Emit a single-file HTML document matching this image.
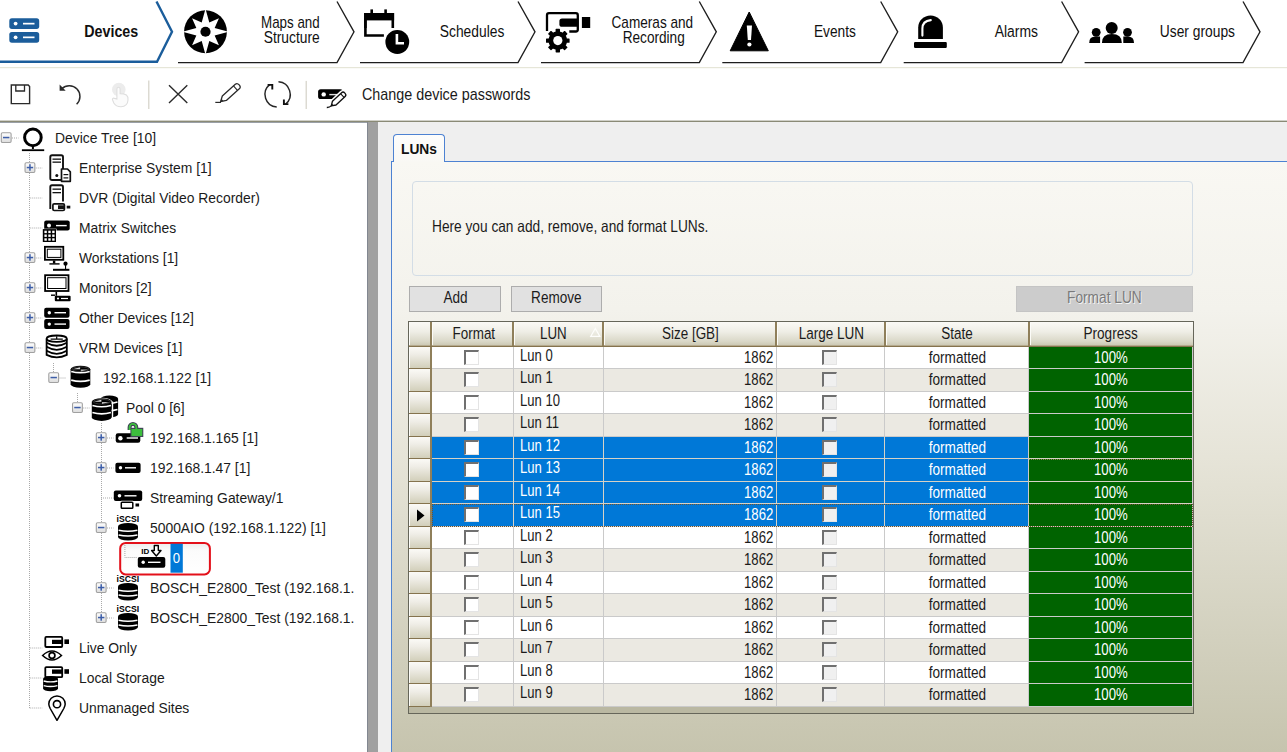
<!DOCTYPE html>
<html><head><meta charset="utf-8"><title>LUNs</title>
<style>
html,body{margin:0;padding:0;}
body{width:1287px;height:752px;position:relative;overflow:hidden;background:#fff;font-family:'Liberation Sans',sans-serif;}
</style></head><body>
<div style="position:absolute;left:378px;top:122px;width:909px;height:630px;background:#efefef"></div><div style="position:absolute;left:367px;top:122px;width:11px;height:630px;background:#a0a0a0"></div><div style="position:absolute;left:367px;top:122px;width:1px;height:630px;background:#828790"></div><div style="position:absolute;left:0px;top:122px;width:367px;height:1px;background:#9aa0a8"></div><div style="position:absolute;left:391px;top:161px;width:896px;height:591px;box-sizing:border-box;border-left:1px solid #4d82d2;border-top:1px solid #4d82d2;background:linear-gradient(#f9f8f3 0%, #f3f2ec 25%, #e6e4d8 50%, #d6d4c3 75%, #c6c4ae 100%)"></div><div style="position:absolute;left:393px;top:134px;width:52px;height:28px;box-sizing:border-box;border:1px solid #4d82d2;border-bottom:none;border-radius:4px 4px 0 0;background:linear-gradient(#fdfdfc,#f9f8f4)"></div><div style="position:absolute;left:401.00px;top:139.91px;width:38.86px;font-family:'Liberation Sans',sans-serif;font-size:14.7px;line-height:18px;color:#111;white-space:nowrap;font-weight:bold;transform:scaleX(0.9385);transform-origin:left 50%;">LUNs</div><div style="position:absolute;left:411.5px;top:181px;width:781px;height:95px;box-sizing:border-box;border:1px solid #d3dde6;border-radius:4px;"></div><div style="position:absolute;left:432.40px;top:215.58px;width:333.42px;font-family:'Liberation Sans',sans-serif;font-size:16.5px;line-height:21px;color:#1b1b1b;white-space:nowrap;transform:scaleX(0.8302);transform-origin:left 50%;">Here you can add, remove, and format LUNs.</div><div style="position:absolute;left:409px;top:286px;width:91.5px;height:26px;box-sizing:border-box;border:1px solid #adadad;background:#e1e1e1"></div><div style="position:absolute;left:440.56px;top:286.75px;width:29.48px;font-family:'Liberation Sans',sans-serif;font-size:16.3px;line-height:20px;color:#1b1b1b;white-space:nowrap;transform:scaleX(0.8349);transform-origin:center 50%;">Add</div><div style="position:absolute;left:510.5px;top:286px;width:91.0px;height:26px;box-sizing:border-box;border:1px solid #adadad;background:#e1e1e1"></div><div style="position:absolute;left:525.98px;top:286.75px;width:61.14px;font-family:'Liberation Sans',sans-serif;font-size:16.3px;line-height:20px;color:#1b1b1b;white-space:nowrap;transform:scaleX(0.8328);transform-origin:center 50%;">Remove</div><div style="position:absolute;left:1015.5px;top:286px;width:177.0px;height:26px;box-sizing:border-box;border:1px solid #c4c4c4;background:#cccccc"></div><div style="position:absolute;left:1059.96px;top:286.75px;width:89.17px;font-family:'Liberation Sans',sans-serif;font-size:16.3px;line-height:20px;color:#7a7a7a;white-space:nowrap;transform:scaleX(0.8413);transform-origin:center 50%;text-shadow:1px 1px 0 #f4f4f4;">Format LUN</div><div style="position:absolute;left:408px;top:321px;width:786px;height:393px;box-sizing:border-box;border:1px solid #66665a;background:#bab8a2"></div><div style="position:absolute;left:409px;top:322px;width:784px;height:24px;background:linear-gradient(#fbfaf6 0%, #efeee6 40%, #dad8c8 80%, #c9c6b0 100%)"></div><div style="position:absolute;left:409px;top:346px;width:784px;height:1px;background:#85734d"></div><div style="position:absolute;left:409px;top:345px;width:784px;height:1px;background:#b5aa8e"></div><div style="position:absolute;left:430px;top:322px;width:2px;height:24px;background:#8f7f5a"></div><div style="position:absolute;left:432px;top:323px;width:1px;height:22px;background:#fcfcf8"></div><div style="position:absolute;left:512px;top:322px;width:2px;height:24px;background:#8f7f5a"></div><div style="position:absolute;left:514px;top:323px;width:1px;height:22px;background:#fcfcf8"></div><div style="position:absolute;left:602px;top:322px;width:2px;height:24px;background:#8f7f5a"></div><div style="position:absolute;left:604px;top:323px;width:1px;height:22px;background:#fcfcf8"></div><div style="position:absolute;left:775px;top:322px;width:2px;height:24px;background:#8f7f5a"></div><div style="position:absolute;left:777px;top:323px;width:1px;height:22px;background:#fcfcf8"></div><div style="position:absolute;left:884px;top:322px;width:2px;height:24px;background:#8f7f5a"></div><div style="position:absolute;left:886px;top:323px;width:1px;height:22px;background:#fcfcf8"></div><div style="position:absolute;left:1028px;top:322px;width:2px;height:24px;background:#8f7f5a"></div><div style="position:absolute;left:1030px;top:323px;width:1px;height:22px;background:#fcfcf8"></div><div style="position:absolute;left:409px;top:323px;width:1px;height:22px;background:#fcfcf8"></div><div style="position:absolute;left:448.21px;top:323.35px;width:52.08px;font-family:'Liberation Sans',sans-serif;font-size:16.3px;line-height:20px;color:#1b1b1b;white-space:nowrap;transform:scaleX(0.8240);transform-origin:center 50%;">Format</div><div style="position:absolute;left:536.71px;top:323.35px;width:33.08px;font-family:'Liberation Sans',sans-serif;font-size:16.3px;line-height:20px;color:#1b1b1b;white-space:nowrap;transform:scaleX(0.8196);transform-origin:center 50%;">LUN</div><div style="position:absolute;left:655.61px;top:323.35px;width:69.28px;font-family:'Liberation Sans',sans-serif;font-size:16.3px;line-height:20px;color:#1b1b1b;white-space:nowrap;transform:scaleX(0.8258);transform-origin:center 50%;">Size [GB]</div><div style="position:absolute;left:791.73px;top:323.35px;width:79.25px;font-family:'Liberation Sans',sans-serif;font-size:16.3px;line-height:20px;color:#1b1b1b;white-space:nowrap;transform:scaleX(0.8292);transform-origin:center 50%;">Large LUN</div><div style="position:absolute;left:937.98px;top:323.35px;width:38.53px;font-family:'Liberation Sans',sans-serif;font-size:16.3px;line-height:20px;color:#1b1b1b;white-space:nowrap;transform:scaleX(0.8283);transform-origin:center 50%;">State</div><div style="position:absolute;left:1078.42px;top:323.35px;width:65.66px;font-family:'Liberation Sans',sans-serif;font-size:16.3px;line-height:20px;color:#1b1b1b;white-space:nowrap;transform:scaleX(0.8349);transform-origin:center 50%;">Progress</div><svg style="position:absolute;left:588px;top:326px" width="14" height="12"><path d="M2.8 10.3 L7.3 2.5 L11.8 10.3 Z" fill="none" stroke="#fdfdfb" stroke-width="1.3"/></svg><div style="position:absolute;left:409px;top:347px;width:22px;height:21px;background:linear-gradient(#fbfaf6 0%, #efede6 35%, #d2cfba 100%)"></div><div style="position:absolute;left:409px;top:347px;width:1px;height:21px;background:#fcfcf8"></div><div style="position:absolute;left:409px;top:368px;width:23px;height:1px;background:#85734d"></div><div style="position:absolute;left:430px;top:347px;width:2px;height:22px;background:#8f7f5a"></div><div style="position:absolute;left:432px;top:347px;width:761px;height:21px;background:#ffffff"></div><div style="position:absolute;left:1029px;top:347px;width:163px;height:21px;background:#006300"></div><div style="position:absolute;left:432px;top:368px;width:761px;height:1px;background:#cacaca"></div><div style="position:absolute;left:513px;top:347px;width:1px;height:21px;background:#cacaca"></div><div style="position:absolute;left:603px;top:347px;width:1px;height:21px;background:#cacaca"></div><div style="position:absolute;left:776px;top:347px;width:1px;height:21px;background:#cacaca"></div><div style="position:absolute;left:884px;top:347px;width:1px;height:21px;background:#cacaca"></div><div style="position:absolute;left:1028px;top:347px;width:1px;height:22px;background:#cacaca"></div><div style="position:absolute;left:1192px;top:347px;width:1px;height:22px;background:#cacaca"></div><div style="position:absolute;left:464px;top:350px;width:15px;height:15px;box-sizing:border-box;border-top:2px solid #707070;border-left:2px solid #707070;border-right:1px solid #e4e4e4;border-bottom:1px solid #e4e4e4;background:#ffffff"></div><div style="position:absolute;left:822px;top:350px;width:15px;height:15px;box-sizing:border-box;border-top:2px solid #707070;border-left:2px solid #707070;border-right:1px solid #e4e4e4;border-bottom:1px solid #e4e4e4;background:#f0f0f0"></div><div style="position:absolute;left:520.00px;top:344.75px;width:41.25px;font-family:'Liberation Sans',sans-serif;font-size:16.3px;line-height:20px;color:#1b1b1b;white-space:nowrap;transform:scaleX(0.8016);transform-origin:left 50%;">Lun 0</div><div style="position:absolute;left:736.67px;top:346.75px;width:36.73px;font-family:'Liberation Sans',sans-serif;font-size:16.3px;line-height:20px;color:#1b1b1b;white-space:nowrap;transform:scaleX(0.8086);transform-origin:right 50%;">1862</div><div style="position:absolute;left:923.36px;top:346.75px;width:69.28px;font-family:'Liberation Sans',sans-serif;font-size:16.3px;line-height:20px;color:#1b1b1b;white-space:nowrap;transform:scaleX(0.8360);transform-origin:center 50%;">formatted</div><div style="position:absolute;left:1090.17px;top:346.75px;width:42.16px;font-family:'Liberation Sans',sans-serif;font-size:16.3px;line-height:20px;color:#fff;white-space:nowrap;transform:scaleX(0.8090);transform-origin:center 50%;">100%</div><div style="position:absolute;left:409px;top:369px;width:22px;height:22px;background:linear-gradient(#fbfaf6 0%, #efede6 35%, #d2cfba 100%)"></div><div style="position:absolute;left:409px;top:369px;width:1px;height:22px;background:#fcfcf8"></div><div style="position:absolute;left:409px;top:391px;width:23px;height:1px;background:#85734d"></div><div style="position:absolute;left:430px;top:369px;width:2px;height:23px;background:#8f7f5a"></div><div style="position:absolute;left:432px;top:369px;width:761px;height:22px;background:#ebe9e2"></div><div style="position:absolute;left:1029px;top:369px;width:163px;height:22px;background:#006300"></div><div style="position:absolute;left:432px;top:391px;width:761px;height:1px;background:#cacaca"></div><div style="position:absolute;left:513px;top:369px;width:1px;height:22px;background:#cacaca"></div><div style="position:absolute;left:603px;top:369px;width:1px;height:22px;background:#cacaca"></div><div style="position:absolute;left:776px;top:369px;width:1px;height:22px;background:#cacaca"></div><div style="position:absolute;left:884px;top:369px;width:1px;height:22px;background:#cacaca"></div><div style="position:absolute;left:1028px;top:369px;width:1px;height:23px;background:#cacaca"></div><div style="position:absolute;left:1192px;top:369px;width:1px;height:23px;background:#cacaca"></div><div style="position:absolute;left:464px;top:372px;width:15px;height:15px;box-sizing:border-box;border-top:2px solid #707070;border-left:2px solid #707070;border-right:1px solid #e4e4e4;border-bottom:1px solid #e4e4e4;background:#ffffff"></div><div style="position:absolute;left:822px;top:372px;width:15px;height:15px;box-sizing:border-box;border-top:2px solid #707070;border-left:2px solid #707070;border-right:1px solid #e4e4e4;border-bottom:1px solid #e4e4e4;background:#f0f0f0"></div><div style="position:absolute;left:520.00px;top:367.25px;width:41.25px;font-family:'Liberation Sans',sans-serif;font-size:16.3px;line-height:20px;color:#1b1b1b;white-space:nowrap;transform:scaleX(0.8016);transform-origin:left 50%;">Lun 1</div><div style="position:absolute;left:736.67px;top:369.25px;width:36.73px;font-family:'Liberation Sans',sans-serif;font-size:16.3px;line-height:20px;color:#1b1b1b;white-space:nowrap;transform:scaleX(0.8086);transform-origin:right 50%;">1862</div><div style="position:absolute;left:923.36px;top:369.25px;width:69.28px;font-family:'Liberation Sans',sans-serif;font-size:16.3px;line-height:20px;color:#1b1b1b;white-space:nowrap;transform:scaleX(0.8360);transform-origin:center 50%;">formatted</div><div style="position:absolute;left:1090.17px;top:369.25px;width:42.16px;font-family:'Liberation Sans',sans-serif;font-size:16.3px;line-height:20px;color:#fff;white-space:nowrap;transform:scaleX(0.8090);transform-origin:center 50%;">100%</div><div style="position:absolute;left:409px;top:392px;width:22px;height:21px;background:linear-gradient(#fbfaf6 0%, #efede6 35%, #d2cfba 100%)"></div><div style="position:absolute;left:409px;top:392px;width:1px;height:21px;background:#fcfcf8"></div><div style="position:absolute;left:409px;top:413px;width:23px;height:1px;background:#85734d"></div><div style="position:absolute;left:430px;top:392px;width:2px;height:22px;background:#8f7f5a"></div><div style="position:absolute;left:432px;top:392px;width:761px;height:21px;background:#ffffff"></div><div style="position:absolute;left:1029px;top:392px;width:163px;height:21px;background:#006300"></div><div style="position:absolute;left:432px;top:413px;width:761px;height:1px;background:#cacaca"></div><div style="position:absolute;left:513px;top:392px;width:1px;height:21px;background:#cacaca"></div><div style="position:absolute;left:603px;top:392px;width:1px;height:21px;background:#cacaca"></div><div style="position:absolute;left:776px;top:392px;width:1px;height:21px;background:#cacaca"></div><div style="position:absolute;left:884px;top:392px;width:1px;height:21px;background:#cacaca"></div><div style="position:absolute;left:1028px;top:392px;width:1px;height:22px;background:#cacaca"></div><div style="position:absolute;left:1192px;top:392px;width:1px;height:22px;background:#cacaca"></div><div style="position:absolute;left:464px;top:395px;width:15px;height:15px;box-sizing:border-box;border-top:2px solid #707070;border-left:2px solid #707070;border-right:1px solid #e4e4e4;border-bottom:1px solid #e4e4e4;background:#ffffff"></div><div style="position:absolute;left:822px;top:395px;width:15px;height:15px;box-sizing:border-box;border-top:2px solid #707070;border-left:2px solid #707070;border-right:1px solid #e4e4e4;border-bottom:1px solid #e4e4e4;background:#f0f0f0"></div><div style="position:absolute;left:520.00px;top:389.75px;width:50.31px;font-family:'Liberation Sans',sans-serif;font-size:16.3px;line-height:20px;color:#1b1b1b;white-space:nowrap;transform:scaleX(0.8015);transform-origin:left 50%;">Lun 10</div><div style="position:absolute;left:736.67px;top:391.75px;width:36.73px;font-family:'Liberation Sans',sans-serif;font-size:16.3px;line-height:20px;color:#1b1b1b;white-space:nowrap;transform:scaleX(0.8086);transform-origin:right 50%;">1862</div><div style="position:absolute;left:923.36px;top:391.75px;width:69.28px;font-family:'Liberation Sans',sans-serif;font-size:16.3px;line-height:20px;color:#1b1b1b;white-space:nowrap;transform:scaleX(0.8360);transform-origin:center 50%;">formatted</div><div style="position:absolute;left:1090.17px;top:391.75px;width:42.16px;font-family:'Liberation Sans',sans-serif;font-size:16.3px;line-height:20px;color:#fff;white-space:nowrap;transform:scaleX(0.8090);transform-origin:center 50%;">100%</div><div style="position:absolute;left:409px;top:414px;width:22px;height:22px;background:linear-gradient(#fbfaf6 0%, #efede6 35%, #d2cfba 100%)"></div><div style="position:absolute;left:409px;top:414px;width:1px;height:22px;background:#fcfcf8"></div><div style="position:absolute;left:409px;top:436px;width:23px;height:1px;background:#85734d"></div><div style="position:absolute;left:430px;top:414px;width:2px;height:23px;background:#8f7f5a"></div><div style="position:absolute;left:432px;top:414px;width:761px;height:22px;background:#ebe9e2"></div><div style="position:absolute;left:1029px;top:414px;width:163px;height:22px;background:#006300"></div><div style="position:absolute;left:432px;top:436px;width:761px;height:1px;background:#cacaca"></div><div style="position:absolute;left:513px;top:414px;width:1px;height:22px;background:#cacaca"></div><div style="position:absolute;left:603px;top:414px;width:1px;height:22px;background:#cacaca"></div><div style="position:absolute;left:776px;top:414px;width:1px;height:22px;background:#cacaca"></div><div style="position:absolute;left:884px;top:414px;width:1px;height:22px;background:#cacaca"></div><div style="position:absolute;left:1028px;top:414px;width:1px;height:23px;background:#cacaca"></div><div style="position:absolute;left:1192px;top:414px;width:1px;height:23px;background:#cacaca"></div><div style="position:absolute;left:464px;top:417px;width:15px;height:15px;box-sizing:border-box;border-top:2px solid #707070;border-left:2px solid #707070;border-right:1px solid #e4e4e4;border-bottom:1px solid #e4e4e4;background:#ffffff"></div><div style="position:absolute;left:822px;top:417px;width:15px;height:15px;box-sizing:border-box;border-top:2px solid #707070;border-left:2px solid #707070;border-right:1px solid #e4e4e4;border-bottom:1px solid #e4e4e4;background:#f0f0f0"></div><div style="position:absolute;left:520.00px;top:412.25px;width:49.09px;font-family:'Liberation Sans',sans-serif;font-size:16.3px;line-height:20px;color:#1b1b1b;white-space:nowrap;transform:scaleX(0.8015);transform-origin:left 50%;">Lun 11</div><div style="position:absolute;left:736.67px;top:414.25px;width:36.73px;font-family:'Liberation Sans',sans-serif;font-size:16.3px;line-height:20px;color:#1b1b1b;white-space:nowrap;transform:scaleX(0.8086);transform-origin:right 50%;">1862</div><div style="position:absolute;left:923.36px;top:414.25px;width:69.28px;font-family:'Liberation Sans',sans-serif;font-size:16.3px;line-height:20px;color:#1b1b1b;white-space:nowrap;transform:scaleX(0.8360);transform-origin:center 50%;">formatted</div><div style="position:absolute;left:1090.17px;top:414.25px;width:42.16px;font-family:'Liberation Sans',sans-serif;font-size:16.3px;line-height:20px;color:#fff;white-space:nowrap;transform:scaleX(0.8090);transform-origin:center 50%;">100%</div><div style="position:absolute;left:409px;top:437px;width:22px;height:21px;background:linear-gradient(#fbfaf6 0%, #efede6 35%, #d2cfba 100%)"></div><div style="position:absolute;left:409px;top:437px;width:1px;height:21px;background:#fcfcf8"></div><div style="position:absolute;left:409px;top:458px;width:23px;height:1px;background:#85734d"></div><div style="position:absolute;left:430px;top:437px;width:2px;height:22px;background:#8f7f5a"></div><div style="position:absolute;left:432px;top:437px;width:761px;height:21px;background:#0078d7"></div><div style="position:absolute;left:1029px;top:437px;width:163px;height:21px;background:#006300"></div><div style="position:absolute;left:432px;top:458px;width:761px;height:1px;background:#d6d2c6"></div><div style="position:absolute;left:513px;top:437px;width:1px;height:21px;background:#d6d2c6"></div><div style="position:absolute;left:603px;top:437px;width:1px;height:21px;background:#d6d2c6"></div><div style="position:absolute;left:776px;top:437px;width:1px;height:21px;background:#d6d2c6"></div><div style="position:absolute;left:884px;top:437px;width:1px;height:21px;background:#d6d2c6"></div><div style="position:absolute;left:1028px;top:437px;width:1px;height:22px;background:#cacaca"></div><div style="position:absolute;left:1192px;top:437px;width:1px;height:22px;background:#cacaca"></div><div style="position:absolute;left:464px;top:440px;width:15px;height:15px;box-sizing:border-box;border-top:2px solid #707070;border-left:2px solid #707070;border-right:1px solid #e4e4e4;border-bottom:1px solid #e4e4e4;background:#ffffff"></div><div style="position:absolute;left:822px;top:440px;width:15px;height:15px;box-sizing:border-box;border-top:2px solid #707070;border-left:2px solid #707070;border-right:1px solid #e4e4e4;border-bottom:1px solid #e4e4e4;background:#f0f0f0"></div><div style="position:absolute;left:520.00px;top:434.75px;width:50.31px;font-family:'Liberation Sans',sans-serif;font-size:16.3px;line-height:20px;color:#ffffff;white-space:nowrap;transform:scaleX(0.8015);transform-origin:left 50%;">Lun 12</div><div style="position:absolute;left:736.67px;top:436.75px;width:36.73px;font-family:'Liberation Sans',sans-serif;font-size:16.3px;line-height:20px;color:#ffffff;white-space:nowrap;transform:scaleX(0.8086);transform-origin:right 50%;">1862</div><div style="position:absolute;left:923.36px;top:436.75px;width:69.28px;font-family:'Liberation Sans',sans-serif;font-size:16.3px;line-height:20px;color:#ffffff;white-space:nowrap;transform:scaleX(0.8360);transform-origin:center 50%;">formatted</div><div style="position:absolute;left:1090.17px;top:436.75px;width:42.16px;font-family:'Liberation Sans',sans-serif;font-size:16.3px;line-height:20px;color:#fff;white-space:nowrap;transform:scaleX(0.8090);transform-origin:center 50%;">100%</div><div style="position:absolute;left:409px;top:459px;width:22px;height:22px;background:linear-gradient(#fbfaf6 0%, #efede6 35%, #d2cfba 100%)"></div><div style="position:absolute;left:409px;top:459px;width:1px;height:22px;background:#fcfcf8"></div><div style="position:absolute;left:409px;top:481px;width:23px;height:1px;background:#85734d"></div><div style="position:absolute;left:430px;top:459px;width:2px;height:23px;background:#8f7f5a"></div><div style="position:absolute;left:432px;top:459px;width:761px;height:22px;background:#0078d7"></div><div style="position:absolute;left:1029px;top:459px;width:163px;height:22px;background:#006300"></div><div style="position:absolute;left:432px;top:481px;width:761px;height:1px;background:#d6d2c6"></div><div style="position:absolute;left:513px;top:459px;width:1px;height:22px;background:#d6d2c6"></div><div style="position:absolute;left:603px;top:459px;width:1px;height:22px;background:#d6d2c6"></div><div style="position:absolute;left:776px;top:459px;width:1px;height:22px;background:#d6d2c6"></div><div style="position:absolute;left:884px;top:459px;width:1px;height:22px;background:#d6d2c6"></div><div style="position:absolute;left:1028px;top:459px;width:1px;height:23px;background:#cacaca"></div><div style="position:absolute;left:1192px;top:459px;width:1px;height:23px;background:#cacaca"></div><div style="position:absolute;left:464px;top:462px;width:15px;height:15px;box-sizing:border-box;border-top:2px solid #707070;border-left:2px solid #707070;border-right:1px solid #e4e4e4;border-bottom:1px solid #e4e4e4;background:#ffffff"></div><div style="position:absolute;left:822px;top:462px;width:15px;height:15px;box-sizing:border-box;border-top:2px solid #707070;border-left:2px solid #707070;border-right:1px solid #e4e4e4;border-bottom:1px solid #e4e4e4;background:#f0f0f0"></div><div style="position:absolute;left:520.00px;top:457.25px;width:50.31px;font-family:'Liberation Sans',sans-serif;font-size:16.3px;line-height:20px;color:#ffffff;white-space:nowrap;transform:scaleX(0.8015);transform-origin:left 50%;">Lun 13</div><div style="position:absolute;left:736.67px;top:459.25px;width:36.73px;font-family:'Liberation Sans',sans-serif;font-size:16.3px;line-height:20px;color:#ffffff;white-space:nowrap;transform:scaleX(0.8086);transform-origin:right 50%;">1862</div><div style="position:absolute;left:923.36px;top:459.25px;width:69.28px;font-family:'Liberation Sans',sans-serif;font-size:16.3px;line-height:20px;color:#ffffff;white-space:nowrap;transform:scaleX(0.8360);transform-origin:center 50%;">formatted</div><div style="position:absolute;left:1090.17px;top:459.25px;width:42.16px;font-family:'Liberation Sans',sans-serif;font-size:16.3px;line-height:20px;color:#fff;white-space:nowrap;transform:scaleX(0.8090);transform-origin:center 50%;">100%</div><div style="position:absolute;left:409px;top:482px;width:22px;height:21px;background:linear-gradient(#fbfaf6 0%, #efede6 35%, #d2cfba 100%)"></div><div style="position:absolute;left:409px;top:482px;width:1px;height:21px;background:#fcfcf8"></div><div style="position:absolute;left:409px;top:503px;width:23px;height:1px;background:#85734d"></div><div style="position:absolute;left:430px;top:482px;width:2px;height:22px;background:#8f7f5a"></div><div style="position:absolute;left:432px;top:482px;width:761px;height:21px;background:#0078d7"></div><div style="position:absolute;left:1029px;top:482px;width:163px;height:21px;background:#006300"></div><div style="position:absolute;left:432px;top:503px;width:761px;height:1px;background:#d6d2c6"></div><div style="position:absolute;left:513px;top:482px;width:1px;height:21px;background:#d6d2c6"></div><div style="position:absolute;left:603px;top:482px;width:1px;height:21px;background:#d6d2c6"></div><div style="position:absolute;left:776px;top:482px;width:1px;height:21px;background:#d6d2c6"></div><div style="position:absolute;left:884px;top:482px;width:1px;height:21px;background:#d6d2c6"></div><div style="position:absolute;left:1028px;top:482px;width:1px;height:22px;background:#cacaca"></div><div style="position:absolute;left:1192px;top:482px;width:1px;height:22px;background:#cacaca"></div><div style="position:absolute;left:464px;top:485px;width:15px;height:15px;box-sizing:border-box;border-top:2px solid #707070;border-left:2px solid #707070;border-right:1px solid #e4e4e4;border-bottom:1px solid #e4e4e4;background:#ffffff"></div><div style="position:absolute;left:822px;top:485px;width:15px;height:15px;box-sizing:border-box;border-top:2px solid #707070;border-left:2px solid #707070;border-right:1px solid #e4e4e4;border-bottom:1px solid #e4e4e4;background:#f0f0f0"></div><div style="position:absolute;left:520.00px;top:479.75px;width:50.31px;font-family:'Liberation Sans',sans-serif;font-size:16.3px;line-height:20px;color:#ffffff;white-space:nowrap;transform:scaleX(0.8015);transform-origin:left 50%;">Lun 14</div><div style="position:absolute;left:736.67px;top:481.75px;width:36.73px;font-family:'Liberation Sans',sans-serif;font-size:16.3px;line-height:20px;color:#ffffff;white-space:nowrap;transform:scaleX(0.8086);transform-origin:right 50%;">1862</div><div style="position:absolute;left:923.36px;top:481.75px;width:69.28px;font-family:'Liberation Sans',sans-serif;font-size:16.3px;line-height:20px;color:#ffffff;white-space:nowrap;transform:scaleX(0.8360);transform-origin:center 50%;">formatted</div><div style="position:absolute;left:1090.17px;top:481.75px;width:42.16px;font-family:'Liberation Sans',sans-serif;font-size:16.3px;line-height:20px;color:#fff;white-space:nowrap;transform:scaleX(0.8090);transform-origin:center 50%;">100%</div><div style="position:absolute;left:409px;top:504px;width:22px;height:22px;background:linear-gradient(#fbfaf6 0%, #efede6 35%, #d2cfba 100%)"></div><div style="position:absolute;left:409px;top:504px;width:1px;height:22px;background:#fcfcf8"></div><div style="position:absolute;left:409px;top:526px;width:23px;height:1px;background:#85734d"></div><div style="position:absolute;left:430px;top:504px;width:2px;height:23px;background:#8f7f5a"></div><div style="position:absolute;left:432px;top:504px;width:761px;height:22px;background:#0078d7"></div><div style="position:absolute;left:1029px;top:504px;width:163px;height:22px;background:#006300"></div><div style="position:absolute;left:432px;top:526px;width:761px;height:1px;background:#d6d2c6"></div><div style="position:absolute;left:513px;top:504px;width:1px;height:22px;background:#d6d2c6"></div><div style="position:absolute;left:603px;top:504px;width:1px;height:22px;background:#d6d2c6"></div><div style="position:absolute;left:776px;top:504px;width:1px;height:22px;background:#d6d2c6"></div><div style="position:absolute;left:884px;top:504px;width:1px;height:22px;background:#d6d2c6"></div><div style="position:absolute;left:1028px;top:504px;width:1px;height:23px;background:#cacaca"></div><div style="position:absolute;left:1192px;top:504px;width:1px;height:23px;background:#cacaca"></div><div style="position:absolute;left:464px;top:507px;width:15px;height:15px;box-sizing:border-box;border-top:2px solid #707070;border-left:2px solid #707070;border-right:1px solid #e4e4e4;border-bottom:1px solid #e4e4e4;background:#ffffff"></div><div style="position:absolute;left:822px;top:507px;width:15px;height:15px;box-sizing:border-box;border-top:2px solid #707070;border-left:2px solid #707070;border-right:1px solid #e4e4e4;border-bottom:1px solid #e4e4e4;background:#f0f0f0"></div><div style="position:absolute;left:520.00px;top:502.25px;width:50.31px;font-family:'Liberation Sans',sans-serif;font-size:16.3px;line-height:20px;color:#ffffff;white-space:nowrap;transform:scaleX(0.8015);transform-origin:left 50%;">Lun 15</div><div style="position:absolute;left:736.67px;top:504.25px;width:36.73px;font-family:'Liberation Sans',sans-serif;font-size:16.3px;line-height:20px;color:#ffffff;white-space:nowrap;transform:scaleX(0.8086);transform-origin:right 50%;">1862</div><div style="position:absolute;left:923.36px;top:504.25px;width:69.28px;font-family:'Liberation Sans',sans-serif;font-size:16.3px;line-height:20px;color:#ffffff;white-space:nowrap;transform:scaleX(0.8360);transform-origin:center 50%;">formatted</div><div style="position:absolute;left:1090.17px;top:504.25px;width:42.16px;font-family:'Liberation Sans',sans-serif;font-size:16.3px;line-height:20px;color:#fff;white-space:nowrap;transform:scaleX(0.8090);transform-origin:center 50%;">100%</div><div style="position:absolute;left:409px;top:527px;width:22px;height:21px;background:linear-gradient(#fbfaf6 0%, #efede6 35%, #d2cfba 100%)"></div><div style="position:absolute;left:409px;top:527px;width:1px;height:21px;background:#fcfcf8"></div><div style="position:absolute;left:409px;top:548px;width:23px;height:1px;background:#85734d"></div><div style="position:absolute;left:430px;top:527px;width:2px;height:22px;background:#8f7f5a"></div><div style="position:absolute;left:432px;top:527px;width:761px;height:21px;background:#ffffff"></div><div style="position:absolute;left:1029px;top:527px;width:163px;height:21px;background:#006300"></div><div style="position:absolute;left:432px;top:548px;width:761px;height:1px;background:#cacaca"></div><div style="position:absolute;left:513px;top:527px;width:1px;height:21px;background:#cacaca"></div><div style="position:absolute;left:603px;top:527px;width:1px;height:21px;background:#cacaca"></div><div style="position:absolute;left:776px;top:527px;width:1px;height:21px;background:#cacaca"></div><div style="position:absolute;left:884px;top:527px;width:1px;height:21px;background:#cacaca"></div><div style="position:absolute;left:1028px;top:527px;width:1px;height:22px;background:#cacaca"></div><div style="position:absolute;left:1192px;top:527px;width:1px;height:22px;background:#cacaca"></div><div style="position:absolute;left:464px;top:530px;width:15px;height:15px;box-sizing:border-box;border-top:2px solid #707070;border-left:2px solid #707070;border-right:1px solid #e4e4e4;border-bottom:1px solid #e4e4e4;background:#ffffff"></div><div style="position:absolute;left:822px;top:530px;width:15px;height:15px;box-sizing:border-box;border-top:2px solid #707070;border-left:2px solid #707070;border-right:1px solid #e4e4e4;border-bottom:1px solid #e4e4e4;background:#f0f0f0"></div><div style="position:absolute;left:520.00px;top:524.75px;width:41.25px;font-family:'Liberation Sans',sans-serif;font-size:16.3px;line-height:20px;color:#1b1b1b;white-space:nowrap;transform:scaleX(0.8016);transform-origin:left 50%;">Lun 2</div><div style="position:absolute;left:736.67px;top:526.75px;width:36.73px;font-family:'Liberation Sans',sans-serif;font-size:16.3px;line-height:20px;color:#1b1b1b;white-space:nowrap;transform:scaleX(0.8086);transform-origin:right 50%;">1862</div><div style="position:absolute;left:923.36px;top:526.75px;width:69.28px;font-family:'Liberation Sans',sans-serif;font-size:16.3px;line-height:20px;color:#1b1b1b;white-space:nowrap;transform:scaleX(0.8360);transform-origin:center 50%;">formatted</div><div style="position:absolute;left:1090.17px;top:526.75px;width:42.16px;font-family:'Liberation Sans',sans-serif;font-size:16.3px;line-height:20px;color:#fff;white-space:nowrap;transform:scaleX(0.8090);transform-origin:center 50%;">100%</div><div style="position:absolute;left:409px;top:549px;width:22px;height:22px;background:linear-gradient(#fbfaf6 0%, #efede6 35%, #d2cfba 100%)"></div><div style="position:absolute;left:409px;top:549px;width:1px;height:22px;background:#fcfcf8"></div><div style="position:absolute;left:409px;top:571px;width:23px;height:1px;background:#85734d"></div><div style="position:absolute;left:430px;top:549px;width:2px;height:23px;background:#8f7f5a"></div><div style="position:absolute;left:432px;top:549px;width:761px;height:22px;background:#ebe9e2"></div><div style="position:absolute;left:1029px;top:549px;width:163px;height:22px;background:#006300"></div><div style="position:absolute;left:432px;top:571px;width:761px;height:1px;background:#cacaca"></div><div style="position:absolute;left:513px;top:549px;width:1px;height:22px;background:#cacaca"></div><div style="position:absolute;left:603px;top:549px;width:1px;height:22px;background:#cacaca"></div><div style="position:absolute;left:776px;top:549px;width:1px;height:22px;background:#cacaca"></div><div style="position:absolute;left:884px;top:549px;width:1px;height:22px;background:#cacaca"></div><div style="position:absolute;left:1028px;top:549px;width:1px;height:23px;background:#cacaca"></div><div style="position:absolute;left:1192px;top:549px;width:1px;height:23px;background:#cacaca"></div><div style="position:absolute;left:464px;top:552px;width:15px;height:15px;box-sizing:border-box;border-top:2px solid #707070;border-left:2px solid #707070;border-right:1px solid #e4e4e4;border-bottom:1px solid #e4e4e4;background:#ffffff"></div><div style="position:absolute;left:822px;top:552px;width:15px;height:15px;box-sizing:border-box;border-top:2px solid #707070;border-left:2px solid #707070;border-right:1px solid #e4e4e4;border-bottom:1px solid #e4e4e4;background:#f0f0f0"></div><div style="position:absolute;left:520.00px;top:547.25px;width:41.25px;font-family:'Liberation Sans',sans-serif;font-size:16.3px;line-height:20px;color:#1b1b1b;white-space:nowrap;transform:scaleX(0.8016);transform-origin:left 50%;">Lun 3</div><div style="position:absolute;left:736.67px;top:549.25px;width:36.73px;font-family:'Liberation Sans',sans-serif;font-size:16.3px;line-height:20px;color:#1b1b1b;white-space:nowrap;transform:scaleX(0.8086);transform-origin:right 50%;">1862</div><div style="position:absolute;left:923.36px;top:549.25px;width:69.28px;font-family:'Liberation Sans',sans-serif;font-size:16.3px;line-height:20px;color:#1b1b1b;white-space:nowrap;transform:scaleX(0.8360);transform-origin:center 50%;">formatted</div><div style="position:absolute;left:1090.17px;top:549.25px;width:42.16px;font-family:'Liberation Sans',sans-serif;font-size:16.3px;line-height:20px;color:#fff;white-space:nowrap;transform:scaleX(0.8090);transform-origin:center 50%;">100%</div><div style="position:absolute;left:409px;top:572px;width:22px;height:21px;background:linear-gradient(#fbfaf6 0%, #efede6 35%, #d2cfba 100%)"></div><div style="position:absolute;left:409px;top:572px;width:1px;height:21px;background:#fcfcf8"></div><div style="position:absolute;left:409px;top:593px;width:23px;height:1px;background:#85734d"></div><div style="position:absolute;left:430px;top:572px;width:2px;height:22px;background:#8f7f5a"></div><div style="position:absolute;left:432px;top:572px;width:761px;height:21px;background:#ffffff"></div><div style="position:absolute;left:1029px;top:572px;width:163px;height:21px;background:#006300"></div><div style="position:absolute;left:432px;top:593px;width:761px;height:1px;background:#cacaca"></div><div style="position:absolute;left:513px;top:572px;width:1px;height:21px;background:#cacaca"></div><div style="position:absolute;left:603px;top:572px;width:1px;height:21px;background:#cacaca"></div><div style="position:absolute;left:776px;top:572px;width:1px;height:21px;background:#cacaca"></div><div style="position:absolute;left:884px;top:572px;width:1px;height:21px;background:#cacaca"></div><div style="position:absolute;left:1028px;top:572px;width:1px;height:22px;background:#cacaca"></div><div style="position:absolute;left:1192px;top:572px;width:1px;height:22px;background:#cacaca"></div><div style="position:absolute;left:464px;top:575px;width:15px;height:15px;box-sizing:border-box;border-top:2px solid #707070;border-left:2px solid #707070;border-right:1px solid #e4e4e4;border-bottom:1px solid #e4e4e4;background:#ffffff"></div><div style="position:absolute;left:822px;top:575px;width:15px;height:15px;box-sizing:border-box;border-top:2px solid #707070;border-left:2px solid #707070;border-right:1px solid #e4e4e4;border-bottom:1px solid #e4e4e4;background:#f0f0f0"></div><div style="position:absolute;left:520.00px;top:569.75px;width:41.25px;font-family:'Liberation Sans',sans-serif;font-size:16.3px;line-height:20px;color:#1b1b1b;white-space:nowrap;transform:scaleX(0.8016);transform-origin:left 50%;">Lun 4</div><div style="position:absolute;left:736.67px;top:571.75px;width:36.73px;font-family:'Liberation Sans',sans-serif;font-size:16.3px;line-height:20px;color:#1b1b1b;white-space:nowrap;transform:scaleX(0.8086);transform-origin:right 50%;">1862</div><div style="position:absolute;left:923.36px;top:571.75px;width:69.28px;font-family:'Liberation Sans',sans-serif;font-size:16.3px;line-height:20px;color:#1b1b1b;white-space:nowrap;transform:scaleX(0.8360);transform-origin:center 50%;">formatted</div><div style="position:absolute;left:1090.17px;top:571.75px;width:42.16px;font-family:'Liberation Sans',sans-serif;font-size:16.3px;line-height:20px;color:#fff;white-space:nowrap;transform:scaleX(0.8090);transform-origin:center 50%;">100%</div><div style="position:absolute;left:409px;top:594px;width:22px;height:22px;background:linear-gradient(#fbfaf6 0%, #efede6 35%, #d2cfba 100%)"></div><div style="position:absolute;left:409px;top:594px;width:1px;height:22px;background:#fcfcf8"></div><div style="position:absolute;left:409px;top:616px;width:23px;height:1px;background:#85734d"></div><div style="position:absolute;left:430px;top:594px;width:2px;height:23px;background:#8f7f5a"></div><div style="position:absolute;left:432px;top:594px;width:761px;height:22px;background:#ebe9e2"></div><div style="position:absolute;left:1029px;top:594px;width:163px;height:22px;background:#006300"></div><div style="position:absolute;left:432px;top:616px;width:761px;height:1px;background:#cacaca"></div><div style="position:absolute;left:513px;top:594px;width:1px;height:22px;background:#cacaca"></div><div style="position:absolute;left:603px;top:594px;width:1px;height:22px;background:#cacaca"></div><div style="position:absolute;left:776px;top:594px;width:1px;height:22px;background:#cacaca"></div><div style="position:absolute;left:884px;top:594px;width:1px;height:22px;background:#cacaca"></div><div style="position:absolute;left:1028px;top:594px;width:1px;height:23px;background:#cacaca"></div><div style="position:absolute;left:1192px;top:594px;width:1px;height:23px;background:#cacaca"></div><div style="position:absolute;left:464px;top:597px;width:15px;height:15px;box-sizing:border-box;border-top:2px solid #707070;border-left:2px solid #707070;border-right:1px solid #e4e4e4;border-bottom:1px solid #e4e4e4;background:#ffffff"></div><div style="position:absolute;left:822px;top:597px;width:15px;height:15px;box-sizing:border-box;border-top:2px solid #707070;border-left:2px solid #707070;border-right:1px solid #e4e4e4;border-bottom:1px solid #e4e4e4;background:#f0f0f0"></div><div style="position:absolute;left:520.00px;top:592.25px;width:41.25px;font-family:'Liberation Sans',sans-serif;font-size:16.3px;line-height:20px;color:#1b1b1b;white-space:nowrap;transform:scaleX(0.8016);transform-origin:left 50%;">Lun 5</div><div style="position:absolute;left:736.67px;top:594.25px;width:36.73px;font-family:'Liberation Sans',sans-serif;font-size:16.3px;line-height:20px;color:#1b1b1b;white-space:nowrap;transform:scaleX(0.8086);transform-origin:right 50%;">1862</div><div style="position:absolute;left:923.36px;top:594.25px;width:69.28px;font-family:'Liberation Sans',sans-serif;font-size:16.3px;line-height:20px;color:#1b1b1b;white-space:nowrap;transform:scaleX(0.8360);transform-origin:center 50%;">formatted</div><div style="position:absolute;left:1090.17px;top:594.25px;width:42.16px;font-family:'Liberation Sans',sans-serif;font-size:16.3px;line-height:20px;color:#fff;white-space:nowrap;transform:scaleX(0.8090);transform-origin:center 50%;">100%</div><div style="position:absolute;left:409px;top:617px;width:22px;height:21px;background:linear-gradient(#fbfaf6 0%, #efede6 35%, #d2cfba 100%)"></div><div style="position:absolute;left:409px;top:617px;width:1px;height:21px;background:#fcfcf8"></div><div style="position:absolute;left:409px;top:638px;width:23px;height:1px;background:#85734d"></div><div style="position:absolute;left:430px;top:617px;width:2px;height:22px;background:#8f7f5a"></div><div style="position:absolute;left:432px;top:617px;width:761px;height:21px;background:#ffffff"></div><div style="position:absolute;left:1029px;top:617px;width:163px;height:21px;background:#006300"></div><div style="position:absolute;left:432px;top:638px;width:761px;height:1px;background:#cacaca"></div><div style="position:absolute;left:513px;top:617px;width:1px;height:21px;background:#cacaca"></div><div style="position:absolute;left:603px;top:617px;width:1px;height:21px;background:#cacaca"></div><div style="position:absolute;left:776px;top:617px;width:1px;height:21px;background:#cacaca"></div><div style="position:absolute;left:884px;top:617px;width:1px;height:21px;background:#cacaca"></div><div style="position:absolute;left:1028px;top:617px;width:1px;height:22px;background:#cacaca"></div><div style="position:absolute;left:1192px;top:617px;width:1px;height:22px;background:#cacaca"></div><div style="position:absolute;left:464px;top:620px;width:15px;height:15px;box-sizing:border-box;border-top:2px solid #707070;border-left:2px solid #707070;border-right:1px solid #e4e4e4;border-bottom:1px solid #e4e4e4;background:#ffffff"></div><div style="position:absolute;left:822px;top:620px;width:15px;height:15px;box-sizing:border-box;border-top:2px solid #707070;border-left:2px solid #707070;border-right:1px solid #e4e4e4;border-bottom:1px solid #e4e4e4;background:#f0f0f0"></div><div style="position:absolute;left:520.00px;top:614.75px;width:41.25px;font-family:'Liberation Sans',sans-serif;font-size:16.3px;line-height:20px;color:#1b1b1b;white-space:nowrap;transform:scaleX(0.8016);transform-origin:left 50%;">Lun 6</div><div style="position:absolute;left:736.67px;top:616.75px;width:36.73px;font-family:'Liberation Sans',sans-serif;font-size:16.3px;line-height:20px;color:#1b1b1b;white-space:nowrap;transform:scaleX(0.8086);transform-origin:right 50%;">1862</div><div style="position:absolute;left:923.36px;top:616.75px;width:69.28px;font-family:'Liberation Sans',sans-serif;font-size:16.3px;line-height:20px;color:#1b1b1b;white-space:nowrap;transform:scaleX(0.8360);transform-origin:center 50%;">formatted</div><div style="position:absolute;left:1090.17px;top:616.75px;width:42.16px;font-family:'Liberation Sans',sans-serif;font-size:16.3px;line-height:20px;color:#fff;white-space:nowrap;transform:scaleX(0.8090);transform-origin:center 50%;">100%</div><div style="position:absolute;left:409px;top:639px;width:22px;height:22px;background:linear-gradient(#fbfaf6 0%, #efede6 35%, #d2cfba 100%)"></div><div style="position:absolute;left:409px;top:639px;width:1px;height:22px;background:#fcfcf8"></div><div style="position:absolute;left:409px;top:661px;width:23px;height:1px;background:#85734d"></div><div style="position:absolute;left:430px;top:639px;width:2px;height:23px;background:#8f7f5a"></div><div style="position:absolute;left:432px;top:639px;width:761px;height:22px;background:#ebe9e2"></div><div style="position:absolute;left:1029px;top:639px;width:163px;height:22px;background:#006300"></div><div style="position:absolute;left:432px;top:661px;width:761px;height:1px;background:#cacaca"></div><div style="position:absolute;left:513px;top:639px;width:1px;height:22px;background:#cacaca"></div><div style="position:absolute;left:603px;top:639px;width:1px;height:22px;background:#cacaca"></div><div style="position:absolute;left:776px;top:639px;width:1px;height:22px;background:#cacaca"></div><div style="position:absolute;left:884px;top:639px;width:1px;height:22px;background:#cacaca"></div><div style="position:absolute;left:1028px;top:639px;width:1px;height:23px;background:#cacaca"></div><div style="position:absolute;left:1192px;top:639px;width:1px;height:23px;background:#cacaca"></div><div style="position:absolute;left:464px;top:642px;width:15px;height:15px;box-sizing:border-box;border-top:2px solid #707070;border-left:2px solid #707070;border-right:1px solid #e4e4e4;border-bottom:1px solid #e4e4e4;background:#ffffff"></div><div style="position:absolute;left:822px;top:642px;width:15px;height:15px;box-sizing:border-box;border-top:2px solid #707070;border-left:2px solid #707070;border-right:1px solid #e4e4e4;border-bottom:1px solid #e4e4e4;background:#f0f0f0"></div><div style="position:absolute;left:520.00px;top:637.25px;width:41.25px;font-family:'Liberation Sans',sans-serif;font-size:16.3px;line-height:20px;color:#1b1b1b;white-space:nowrap;transform:scaleX(0.8016);transform-origin:left 50%;">Lun 7</div><div style="position:absolute;left:736.67px;top:639.25px;width:36.73px;font-family:'Liberation Sans',sans-serif;font-size:16.3px;line-height:20px;color:#1b1b1b;white-space:nowrap;transform:scaleX(0.8086);transform-origin:right 50%;">1862</div><div style="position:absolute;left:923.36px;top:639.25px;width:69.28px;font-family:'Liberation Sans',sans-serif;font-size:16.3px;line-height:20px;color:#1b1b1b;white-space:nowrap;transform:scaleX(0.8360);transform-origin:center 50%;">formatted</div><div style="position:absolute;left:1090.17px;top:639.25px;width:42.16px;font-family:'Liberation Sans',sans-serif;font-size:16.3px;line-height:20px;color:#fff;white-space:nowrap;transform:scaleX(0.8090);transform-origin:center 50%;">100%</div><div style="position:absolute;left:409px;top:662px;width:22px;height:21px;background:linear-gradient(#fbfaf6 0%, #efede6 35%, #d2cfba 100%)"></div><div style="position:absolute;left:409px;top:662px;width:1px;height:21px;background:#fcfcf8"></div><div style="position:absolute;left:409px;top:683px;width:23px;height:1px;background:#85734d"></div><div style="position:absolute;left:430px;top:662px;width:2px;height:22px;background:#8f7f5a"></div><div style="position:absolute;left:432px;top:662px;width:761px;height:21px;background:#ffffff"></div><div style="position:absolute;left:1029px;top:662px;width:163px;height:21px;background:#006300"></div><div style="position:absolute;left:432px;top:683px;width:761px;height:1px;background:#cacaca"></div><div style="position:absolute;left:513px;top:662px;width:1px;height:21px;background:#cacaca"></div><div style="position:absolute;left:603px;top:662px;width:1px;height:21px;background:#cacaca"></div><div style="position:absolute;left:776px;top:662px;width:1px;height:21px;background:#cacaca"></div><div style="position:absolute;left:884px;top:662px;width:1px;height:21px;background:#cacaca"></div><div style="position:absolute;left:1028px;top:662px;width:1px;height:22px;background:#cacaca"></div><div style="position:absolute;left:1192px;top:662px;width:1px;height:22px;background:#cacaca"></div><div style="position:absolute;left:464px;top:665px;width:15px;height:15px;box-sizing:border-box;border-top:2px solid #707070;border-left:2px solid #707070;border-right:1px solid #e4e4e4;border-bottom:1px solid #e4e4e4;background:#ffffff"></div><div style="position:absolute;left:822px;top:665px;width:15px;height:15px;box-sizing:border-box;border-top:2px solid #707070;border-left:2px solid #707070;border-right:1px solid #e4e4e4;border-bottom:1px solid #e4e4e4;background:#f0f0f0"></div><div style="position:absolute;left:520.00px;top:659.75px;width:41.25px;font-family:'Liberation Sans',sans-serif;font-size:16.3px;line-height:20px;color:#1b1b1b;white-space:nowrap;transform:scaleX(0.8016);transform-origin:left 50%;">Lun 8</div><div style="position:absolute;left:736.67px;top:661.75px;width:36.73px;font-family:'Liberation Sans',sans-serif;font-size:16.3px;line-height:20px;color:#1b1b1b;white-space:nowrap;transform:scaleX(0.8086);transform-origin:right 50%;">1862</div><div style="position:absolute;left:923.36px;top:661.75px;width:69.28px;font-family:'Liberation Sans',sans-serif;font-size:16.3px;line-height:20px;color:#1b1b1b;white-space:nowrap;transform:scaleX(0.8360);transform-origin:center 50%;">formatted</div><div style="position:absolute;left:1090.17px;top:661.75px;width:42.16px;font-family:'Liberation Sans',sans-serif;font-size:16.3px;line-height:20px;color:#fff;white-space:nowrap;transform:scaleX(0.8090);transform-origin:center 50%;">100%</div><div style="position:absolute;left:409px;top:684px;width:22px;height:22px;background:linear-gradient(#fbfaf6 0%, #efede6 35%, #d2cfba 100%)"></div><div style="position:absolute;left:409px;top:684px;width:1px;height:22px;background:#fcfcf8"></div><div style="position:absolute;left:409px;top:706px;width:23px;height:1px;background:#85734d"></div><div style="position:absolute;left:430px;top:684px;width:2px;height:23px;background:#8f7f5a"></div><div style="position:absolute;left:432px;top:684px;width:761px;height:22px;background:#ebe9e2"></div><div style="position:absolute;left:1029px;top:684px;width:163px;height:22px;background:#006300"></div><div style="position:absolute;left:432px;top:706px;width:761px;height:1px;background:#cacaca"></div><div style="position:absolute;left:513px;top:684px;width:1px;height:22px;background:#cacaca"></div><div style="position:absolute;left:603px;top:684px;width:1px;height:22px;background:#cacaca"></div><div style="position:absolute;left:776px;top:684px;width:1px;height:22px;background:#cacaca"></div><div style="position:absolute;left:884px;top:684px;width:1px;height:22px;background:#cacaca"></div><div style="position:absolute;left:1028px;top:684px;width:1px;height:23px;background:#cacaca"></div><div style="position:absolute;left:1192px;top:684px;width:1px;height:23px;background:#cacaca"></div><div style="position:absolute;left:464px;top:687px;width:15px;height:15px;box-sizing:border-box;border-top:2px solid #707070;border-left:2px solid #707070;border-right:1px solid #e4e4e4;border-bottom:1px solid #e4e4e4;background:#ffffff"></div><div style="position:absolute;left:822px;top:687px;width:15px;height:15px;box-sizing:border-box;border-top:2px solid #707070;border-left:2px solid #707070;border-right:1px solid #e4e4e4;border-bottom:1px solid #e4e4e4;background:#f0f0f0"></div><div style="position:absolute;left:520.00px;top:682.25px;width:41.25px;font-family:'Liberation Sans',sans-serif;font-size:16.3px;line-height:20px;color:#1b1b1b;white-space:nowrap;transform:scaleX(0.8016);transform-origin:left 50%;">Lun 9</div><div style="position:absolute;left:736.67px;top:684.25px;width:36.73px;font-family:'Liberation Sans',sans-serif;font-size:16.3px;line-height:20px;color:#1b1b1b;white-space:nowrap;transform:scaleX(0.8086);transform-origin:right 50%;">1862</div><div style="position:absolute;left:923.36px;top:684.25px;width:69.28px;font-family:'Liberation Sans',sans-serif;font-size:16.3px;line-height:20px;color:#1b1b1b;white-space:nowrap;transform:scaleX(0.8360);transform-origin:center 50%;">formatted</div><div style="position:absolute;left:1090.17px;top:684.25px;width:42.16px;font-family:'Liberation Sans',sans-serif;font-size:16.3px;line-height:20px;color:#fff;white-space:nowrap;transform:scaleX(0.8090);transform-origin:center 50%;">100%</div><div style="position:absolute;left:432px;top:504px;width:761px;height:23px;box-sizing:border-box;border:1px dotted #6e5230;"></div><div style="position:absolute;left:1029px;top:459px;width:163px;height:1px;border-top:1px dotted #b08a5a;box-sizing:border-box;opacity:0.8"></div><svg style="position:absolute;left:414px;top:508px" width="14" height="16"><path d="M3 1.5 L10.5 7.5 L3 13.5 Z" fill="#000"/></svg><div style="position:absolute;left:0;top:123px;width:367px;height:629px;overflow:hidden;"><div style="position:absolute;left:0;top:-123px;width:367px;height:752px;"><svg style="position:absolute;left:0;top:0" width="367" height="752" viewBox="0 0 367 752"><path d="M29.5 153 V708" stroke="#a9a9a9" stroke-width="1" stroke-dasharray="1 1"/><path d="M53.5 363 V378" stroke="#a9a9a9" stroke-width="1" stroke-dasharray="1 1"/><path d="M77.5 393 V408" stroke="#a9a9a9" stroke-width="1" stroke-dasharray="1 1"/><path d="M101.5 423 V618" stroke="#a9a9a9" stroke-width="1" stroke-dasharray="1 1"/><path d="M12.0 138.0 H18.5" stroke="#a9a9a9" stroke-width="1" stroke-dasharray="1 1"/><circle cx="32.9" cy="137.4" r="8.3" fill="none" stroke="#000" stroke-width="3"/><rect x="31.9" y="145.5" width="2" height="3.5" fill="#000"/><rect x="21.9" y="149.3" width="22.3" height="1.8" fill="#000"/><rect x="1.2999999999999998" y="132.7" width="9.8" height="9.8" rx="1.2" fill="url(#bxg)" stroke="#a0a0a0" stroke-width="1.1"/><rect x="3.0" y="136.8" width="6.4" height="1.5" fill="#3d5ea8"/><path d="M35.75 168.0 H42.25" stroke="#a9a9a9" stroke-width="1" stroke-dasharray="1 1"/><rect x="50.3" y="155.3" width="12.7" height="24.7" rx="1.8" fill="none" stroke="#111" stroke-width="1.9"/><rect x="52.5" y="158.5" width="8.5" height="1.3" fill="#111"/><rect x="52.5" y="161.5" width="8.5" height="1.3" fill="#111"/><circle cx="56.8" cy="175.4" r="1.5" fill="#111"/><path d="M61.5 169.0 H67.5 L70.3 171.8 V181.3 H61.5 Z" fill="#fff" stroke="#111" stroke-width="1.7" stroke-linejoin="round"/><rect x="63.5" y="174.0" width="4.8" height="1.2" fill="#111"/><rect x="63.5" y="177.3" width="4.8" height="1.2" fill="#111"/><rect x="25.05" y="162.7" width="9.8" height="9.8" rx="1.2" fill="url(#bxg)" stroke="#a0a0a0" stroke-width="1.1"/><rect x="26.75" y="166.8" width="6.4" height="1.5" fill="#3d5ea8"/><rect x="29.2" y="164.2" width="1.5" height="6.5" fill="#3d5ea8"/><path d="M29.75 198.0 H42.25" stroke="#a9a9a9" stroke-width="1" stroke-dasharray="1 1"/><path d="M50.3 209.0 V187.0 Q50.3 185.2 52 185.2 H61.3 Q63 185.2 63 187.0 V201.5" fill="none" stroke="#111" stroke-width="1.9"/><rect x="52.5" y="188.5" width="8.5" height="1.3" fill="#111"/><rect x="52.5" y="192.0" width="8.5" height="1.3" fill="#111"/><rect x="52.9" y="203.8" width="11.5" height="6.7" rx="1.3" fill="#fff" stroke="#111" stroke-width="1.7"/><rect x="58" y="205.3" width="6.4" height="3.7" fill="#111"/><rect x="66.7" y="205.7" width="3.6" height="2.8" fill="#111"/><path d="M29.75 228.0 H42.25" stroke="#a9a9a9" stroke-width="1" stroke-dasharray="1 1"/><rect x="44.2" y="220.4" width="25.5" height="10.2" rx="2" fill="#000"/><circle cx="49" cy="225.5" r="2" fill="#fff"/><rect x="56" y="224.9" width="10.7" height="1.4" fill="#fff"/><rect x="42.3" y="228.7" width="14.2" height="13.6" fill="#fff"/><rect x="42.8" y="229.1" width="13.2" height="12.9" fill="#000"/><rect x="44.4" y="230.7" width="2.4" height="2.4" fill="#fff"/><rect x="44.4" y="234.5" width="2.4" height="2.4" fill="#fff"/><rect x="44.4" y="238.29999999999998" width="2.4" height="2.4" fill="#fff"/><rect x="48.3" y="230.7" width="2.4" height="2.4" fill="#fff"/><rect x="48.3" y="234.5" width="2.4" height="2.4" fill="#fff"/><rect x="48.3" y="238.29999999999998" width="2.4" height="2.4" fill="#fff"/><rect x="52.199999999999996" y="230.7" width="2.4" height="2.4" fill="#fff"/><rect x="52.199999999999996" y="234.5" width="2.4" height="2.4" fill="#fff"/><rect x="52.199999999999996" y="238.29999999999998" width="2.4" height="2.4" fill="#fff"/><path d="M35.75 258.0 H42.25" stroke="#a9a9a9" stroke-width="1" stroke-dasharray="1 1"/><rect x="44.9" y="246.8" width="18.4" height="13" fill="none" stroke="#000" stroke-width="1.8"/><rect x="47.3" y="249.2" width="13.6" height="8.2" fill="none" stroke="#000" stroke-width="1"/><rect x="52.9" y="260.5" width="2.4" height="3" fill="#000"/><rect x="49.4" y="263.2" width="10.2" height="1.4" fill="#000"/><rect x="53" y="268.8" width="16.4" height="2" fill="#000"/><rect x="65" y="264.5" width="1.1" height="4.5" fill="#000"/><circle cx="65.5" cy="263.7" r="2.1" fill="#000"/><rect x="25.05" y="252.7" width="9.8" height="9.8" rx="1.2" fill="url(#bxg)" stroke="#a0a0a0" stroke-width="1.1"/><rect x="26.75" y="256.8" width="6.4" height="1.5" fill="#3d5ea8"/><rect x="29.2" y="254.2" width="1.5" height="6.5" fill="#3d5ea8"/><path d="M35.75 288.0 H42.25" stroke="#a9a9a9" stroke-width="1" stroke-dasharray="1 1"/><rect x="45.1" y="275.2" width="23.4" height="15.8" fill="none" stroke="#000" stroke-width="1.8"/><rect x="47.6" y="277.7" width="18.4" height="10.8" fill="none" stroke="#000" stroke-width="1"/><rect x="55.5" y="291.8" width="1.6" height="4" fill="#000"/><rect x="51" y="294.5" width="4" height="1.4" fill="#000"/><rect x="54.8" y="295.8" width="15.8" height="5.4" rx="1" fill="#000"/><circle cx="58" cy="298.5" r="1.1" fill="#fff"/><rect x="61" y="297.9" width="7" height="1.2" fill="#fff"/><rect x="25.05" y="282.7" width="9.8" height="9.8" rx="1.2" fill="url(#bxg)" stroke="#a0a0a0" stroke-width="1.1"/><rect x="26.75" y="286.8" width="6.4" height="1.5" fill="#3d5ea8"/><rect x="29.2" y="284.2" width="1.5" height="6.5" fill="#3d5ea8"/><path d="M35.75 318.0 H42.25" stroke="#a9a9a9" stroke-width="1" stroke-dasharray="1 1"/><rect x="44.2" y="307.7" width="25.3" height="10" rx="2" fill="#000"/><rect x="44.2" y="319.1" width="25.3" height="10" rx="2" fill="#000"/><circle cx="49.3" cy="312.7" r="1.7" fill="#fff"/><rect x="54.5" y="312.0" width="11.5" height="1.4" fill="#fff"/><circle cx="49.3" cy="324.1" r="1.7" fill="#fff"/><rect x="54.5" y="323.4" width="11.5" height="1.4" fill="#fff"/><rect x="25.05" y="312.7" width="9.8" height="9.8" rx="1.2" fill="url(#bxg)" stroke="#a0a0a0" stroke-width="1.1"/><rect x="26.75" y="316.8" width="6.4" height="1.5" fill="#3d5ea8"/><rect x="29.2" y="314.2" width="1.5" height="6.5" fill="#3d5ea8"/><path d="M35.75 348.0 H42.25" stroke="#a9a9a9" stroke-width="1" stroke-dasharray="1 1"/><path d="M46.6 338.7 V354.9 Q56.7 359.9 66.8 354.9 V338.7" fill="none" stroke="#000" stroke-width="1.8"/><ellipse cx="56.7" cy="338.7" rx="10.1" ry="3.2" fill="none" stroke="#000" stroke-width="1.8"/><path d="M46.6 342.75 Q56.7 348.75 66.8 342.75" fill="none" stroke="#000" stroke-width="1.8"/><path d="M46.6 346.8 Q56.7 352.8 66.8 346.8" fill="none" stroke="#000" stroke-width="1.8"/><path d="M46.6 350.84999999999997 Q56.7 356.84999999999997 66.8 350.84999999999997" fill="none" stroke="#000" stroke-width="1.8"/><path d="M56.7 336.2 V338.7 M50.6 339.2 H62.8" stroke="#000" stroke-width="1.2"/><rect x="25.05" y="342.7" width="9.8" height="9.8" rx="1.2" fill="url(#bxg)" stroke="#a0a0a0" stroke-width="1.1"/><rect x="26.75" y="346.8" width="6.4" height="1.5" fill="#3d5ea8"/><path d="M59.5 378.0 H66.0" stroke="#a9a9a9" stroke-width="1" stroke-dasharray="1 1"/><g><path d="M70.6 369.2 V384.2 A9.85 3.5 0 0 0 90.3 384.2 V369.2 A9.85 3.5 0 0 0 70.6 369.2 Z" fill="#000"/><path d="M71.19999999999999 371.506 Q80.44999999999999 374.106 89.7 371.506" fill="none" stroke="#fff" stroke-width="1.6"/><path d="M71.19999999999999 380.108 Q80.44999999999999 382.708 89.7 380.108" fill="none" stroke="#fff" stroke-width="1.6"/><ellipse cx="80.44999999999999" cy="369.2" rx="8.549999999999999" ry="2.3" fill="none" stroke="#555" stroke-width="0.6"/><path d="M72.6 369.2 L80.14999999999999 367.2 V369.2 Z" fill="#d8d8d8"/><path d="M88.3 369.4 L80.74999999999999 371.4 V369.4 Z" fill="#b8b8b8"/></g><rect x="48.8" y="372.7" width="9.8" height="9.8" rx="1.2" fill="url(#bxg)" stroke="#a0a0a0" stroke-width="1.1"/><rect x="50.5" y="376.8" width="6.4" height="1.5" fill="#3d5ea8"/><path d="M83.25 408.0 H89.75" stroke="#a9a9a9" stroke-width="1" stroke-dasharray="1 1"/><g><path d="M100.7 398.79999999999995 V414.2 A8.7 3.4 0 0 0 118.1 414.2 V398.79999999999995 A8.7 3.4 0 0 0 100.7 398.79999999999995 Z" fill="#000"/><path d="M101.3 401.96999999999997 Q109.4 404.36999999999995 117.5 401.96999999999997" fill="none" stroke="#fff" stroke-width="1.6"/><path d="M101.3 409.518 Q109.4 411.91799999999995 117.5 409.518" fill="none" stroke="#fff" stroke-width="1.6"/></g><path d="M112.4 401.5 V420.5" stroke="#fff" stroke-width="1.6"/><ellipse cx="101.65" cy="402.1" rx="10.8" ry="4.3" fill="#fff"/><g><path d="M91.8 401.7 V417.4 A9.85 3.5 0 0 0 111.5 417.4 V401.7 A9.85 3.5 0 0 0 91.8 401.7 Z" fill="#000"/><path d="M92.39999999999999 405.50329999999997 Q101.64999999999999 408.1033 110.9 405.50329999999997" fill="none" stroke="#fff" stroke-width="1.6"/><path d="M92.39999999999999 412.563 Q101.64999999999999 415.163 110.9 412.563" fill="none" stroke="#fff" stroke-width="1.6"/><ellipse cx="101.64999999999999" cy="401.7" rx="8.549999999999999" ry="2.3" fill="none" stroke="#555" stroke-width="0.6"/><path d="M93.8 401.7 L101.35 399.7 V401.7 Z" fill="#d8d8d8"/><path d="M109.5 401.9 L101.94999999999999 403.9 V401.9 Z" fill="#b8b8b8"/></g><rect x="72.55" y="402.7" width="9.8" height="9.8" rx="1.2" fill="url(#bxg)" stroke="#a0a0a0" stroke-width="1.1"/><rect x="74.25" y="406.8" width="6.4" height="1.5" fill="#3d5ea8"/><path d="M107.0 438.0 H113.5" stroke="#a9a9a9" stroke-width="1" stroke-dasharray="1 1"/><rect x="115.7" y="433.2" width="24.6" height="9.5" rx="2.2" fill="#000"/><circle cx="120.4" cy="438.2" r="2.2" fill="#fff"/><rect x="126.7" y="437.3" width="11.3" height="1.4" fill="#fff"/><path d="M129.6 430.0 V427.3 A3.35 3.35 0 0 1 136.3 427.3 V429.5" fill="none" stroke="#3f4656" stroke-width="4"/><rect x="131" y="428.4" width="11.7" height="8" fill="#3cbe3c" stroke="#3f4656" stroke-width="1.2"/><path d="M129.6 429.9 V427.3 A3.35 3.35 0 0 1 136.3 427.3 V428.9" fill="none" stroke="#3cbe3c" stroke-width="1.8"/><rect x="131.6" y="429.0" width="10.5" height="6.8" fill="#3cbe3c"/><rect x="96.3" y="432.7" width="9.8" height="9.8" rx="1.2" fill="url(#bxg)" stroke="#a0a0a0" stroke-width="1.1"/><rect x="98.0" y="436.8" width="6.4" height="1.5" fill="#3d5ea8"/><rect x="100.45" y="434.2" width="1.5" height="6.5" fill="#3d5ea8"/><path d="M107.0 468.0 H113.5" stroke="#a9a9a9" stroke-width="1" stroke-dasharray="1 1"/><rect x="115.4" y="462.7" width="25.2" height="10.3" rx="2" fill="#000"/><circle cx="120.5" cy="467.8" r="1.7" fill="#fff"/><rect x="125" y="467.1" width="11" height="1.4" fill="#fff"/><rect x="96.3" y="462.7" width="9.8" height="9.8" rx="1.2" fill="url(#bxg)" stroke="#a0a0a0" stroke-width="1.1"/><rect x="98.0" y="466.8" width="6.4" height="1.5" fill="#3d5ea8"/><rect x="100.45" y="464.2" width="1.5" height="6.5" fill="#3d5ea8"/><path d="M101.0 498.0 H113.5" stroke="#a9a9a9" stroke-width="1" stroke-dasharray="1 1"/><rect x="113.8" y="490.6" width="28.4" height="10.5" rx="2" fill="#000"/><circle cx="119.5" cy="495.8" r="1.8" fill="#fff"/><rect x="124.5" y="495.1" width="12" height="1.4" fill="#fff"/><rect x="119.8" y="500.7" width="14.5" height="9" rx="1.5" fill="#fff"/><rect x="121.3" y="502.2" width="11.5" height="6" rx="0.8" fill="none" stroke="#000" stroke-width="1.5"/><rect x="135.5" y="503.5" width="3.6" height="3" fill="#000"/><path d="M107.0 528.0 H113.5" stroke="#a9a9a9" stroke-width="1" stroke-dasharray="1 1"/><text x="127.8" y="521.7" text-anchor="middle" font-family="Liberation Sans" font-weight="bold" font-size="8.4" fill="#000" textLength="22.5" lengthAdjust="spacingAndGlyphs">iSCSI</text><g><path d="M118 526.4 V537.1 A10.0 3.3 0 0 0 138 537.1 V526.4 A10.0 3.3 0 0 0 118 526.4 Z" fill="#000"/><path d="M118.6 530.1445 Q128.0 532.1445 137.4 530.1445" fill="none" stroke="#fff" stroke-width="1.5"/><path d="M118.6 535.0231 Q128.0 537.0231 137.4 535.0231" fill="none" stroke="#fff" stroke-width="1.5"/></g><rect x="96.3" y="522.7" width="9.8" height="9.8" rx="1.2" fill="url(#bxg)" stroke="#a0a0a0" stroke-width="1.1"/><rect x="98.0" y="526.8" width="6.4" height="1.5" fill="#3d5ea8"/><path d="M107.0 588.0 H113.5" stroke="#a9a9a9" stroke-width="1" stroke-dasharray="1 1"/><text x="127.8" y="581.7" text-anchor="middle" font-family="Liberation Sans" font-weight="bold" font-size="8.4" fill="#000" textLength="22.5" lengthAdjust="spacingAndGlyphs">iSCSI</text><g><path d="M118 586.4 V597.1 A10.0 3.3 0 0 0 138 597.1 V586.4 A10.0 3.3 0 0 0 118 586.4 Z" fill="#000"/><path d="M118.6 590.1445 Q128.0 592.1445 137.4 590.1445" fill="none" stroke="#fff" stroke-width="1.5"/><path d="M118.6 595.0231 Q128.0 597.0231 137.4 595.0231" fill="none" stroke="#fff" stroke-width="1.5"/></g><rect x="96.3" y="582.7" width="9.8" height="9.8" rx="1.2" fill="url(#bxg)" stroke="#a0a0a0" stroke-width="1.1"/><rect x="98.0" y="586.8" width="6.4" height="1.5" fill="#3d5ea8"/><rect x="100.45" y="584.2" width="1.5" height="6.5" fill="#3d5ea8"/><path d="M107.0 618.0 H113.5" stroke="#a9a9a9" stroke-width="1" stroke-dasharray="1 1"/><text x="127.8" y="611.7" text-anchor="middle" font-family="Liberation Sans" font-weight="bold" font-size="8.4" fill="#000" textLength="22.5" lengthAdjust="spacingAndGlyphs">iSCSI</text><g><path d="M118 616.4 V627.1 A10.0 3.3 0 0 0 138 627.1 V616.4 A10.0 3.3 0 0 0 118 616.4 Z" fill="#000"/><path d="M118.6 620.1445 Q128.0 622.1445 137.4 620.1445" fill="none" stroke="#fff" stroke-width="1.5"/><path d="M118.6 625.0231 Q128.0 627.0231 137.4 625.0231" fill="none" stroke="#fff" stroke-width="1.5"/></g><rect x="96.3" y="612.7" width="9.8" height="9.8" rx="1.2" fill="url(#bxg)" stroke="#a0a0a0" stroke-width="1.1"/><rect x="98.0" y="616.8" width="6.4" height="1.5" fill="#3d5ea8"/><rect x="100.45" y="614.2" width="1.5" height="6.5" fill="#3d5ea8"/><path d="M29.75 648.0 H42.25" stroke="#a9a9a9" stroke-width="1" stroke-dasharray="1 1"/><rect x="45.3" y="636.9" width="16.9" height="10.1" rx="1" fill="#fff" stroke="#000" stroke-width="1.8"/><rect x="52" y="639.8" width="10" height="4.2" fill="#000"/><rect x="64.4" y="639.4" width="4.6" height="4.6" fill="#000"/><path d="M42.6 655.5 Q52 646.6 61.5 655.5 Q52 664.4 42.6 655.5 Z" fill="none" stroke="#000" stroke-width="1.5"/><circle cx="52" cy="655.5" r="2.9" fill="none" stroke="#000" stroke-width="1.7"/><path d="M29.75 678.0 H42.25" stroke="#a9a9a9" stroke-width="1" stroke-dasharray="1 1"/><rect x="45.3" y="667.1" width="16.9" height="10.1" rx="1" fill="#fff" stroke="#000" stroke-width="1.8"/><rect x="52" y="669.5" width="10" height="4.3" fill="#000"/><rect x="64.4" y="669.2" width="4.6" height="4.6" fill="#000"/><g><path d="M43.1 678.8 V688.5 A7.45 2.8 0 0 0 58.0 688.5 V678.8 A7.45 2.8 0 0 0 43.1 678.8 Z" fill="#000"/><path d="M43.7 681.0058 Q50.550000000000004 682.8058 57.4 681.0058" fill="none" stroke="#fff" stroke-width="1.4"/><path d="M43.7 685.657 Q50.550000000000004 687.457 57.4 685.657" fill="none" stroke="#fff" stroke-width="1.4"/></g><path d="M29.75 708.0 H42.25" stroke="#a9a9a9" stroke-width="1" stroke-dasharray="1 1"/><path d="M57 720.3 L50.2 708.5 Q48.8 705.5 48.8 704.1 A8.2 8.2 0 0 1 65.2 704.1 Q65.2 705.5 63.8 708.5 Z" fill="none" stroke="#000" stroke-width="1.5" stroke-linejoin="round"/><circle cx="57" cy="704.2" r="3.6" fill="none" stroke="#000" stroke-width="1.6"/><defs><linearGradient id="bxg" x1="0" y1="0" x2="0" y2="1"><stop offset="0" stop-color="#ffffff"/><stop offset="1" stop-color="#dcdcdc"/></linearGradient><linearGradient id="edsh" x1="0" y1="0" x2="0" y2="1"><stop offset="0" stop-color="#ececec"/><stop offset="0.25" stop-color="#fbfbfb"/><stop offset="1" stop-color="#ffffff"/></linearGradient></defs><rect x="120.2" y="542.9" width="89.7" height="31.5" rx="5.5" fill="url(#edsh)" stroke="#e3101a" stroke-width="2"/><path d="M124.9 545 V557.5 H137" fill="none" stroke="#a9a9a9" stroke-width="1" stroke-dasharray="1 1"/><text x="145.3" y="553.9" text-anchor="middle" font-family="Liberation Sans" font-weight="bold" font-size="8" fill="#000">ID</text><path d="M154.3 545.5 H158.3 V550.5 H161 L156.3 556 L151.6 550.5 H154.3 Z" fill="#fff" stroke="#000" stroke-width="1.4" stroke-linejoin="round"/><rect x="137.8" y="557" width="27.5" height="10.7" rx="2" fill="#000"/><circle cx="143.2" cy="562.3" r="1.7" fill="#fff"/><rect x="148" y="561.6" width="12.5" height="1.4" fill="#fff"/><rect x="170.5" y="543.8" width="12.3" height="28.9" fill="#0078d7"/></svg><div style="position:absolute;left:55.00px;top:127.63px;width:113.36px;font-family:'Liberation Sans',sans-serif;font-size:15.5px;line-height:19px;color:#1b1b1b;white-space:nowrap;transform:scaleX(0.8952);transform-origin:left 50%;">Device Tree [10]</div><div style="position:absolute;left:78.75px;top:157.63px;width:148.67px;font-family:'Liberation Sans',sans-serif;font-size:15.5px;line-height:19px;color:#1b1b1b;white-space:nowrap;transform:scaleX(0.8952);transform-origin:left 50%;">Enterprise System [1]</div><div style="position:absolute;left:78.75px;top:187.63px;width:202.66px;font-family:'Liberation Sans',sans-serif;font-size:15.5px;line-height:19px;color:#1b1b1b;white-space:nowrap;transform:scaleX(0.8952);transform-origin:left 50%;">DVR (Digital Video Recorder)</div><div style="position:absolute;left:78.75px;top:217.63px;width:109.03px;font-family:'Liberation Sans',sans-serif;font-size:15.5px;line-height:19px;color:#1b1b1b;white-space:nowrap;transform:scaleX(0.8952);transform-origin:left 50%;">Matrix Switches</div><div style="position:absolute;left:78.75px;top:247.63px;width:111.34px;font-family:'Liberation Sans',sans-serif;font-size:15.5px;line-height:19px;color:#1b1b1b;white-space:nowrap;transform:scaleX(0.8952);transform-origin:left 50%;">Workstations [1]</div><div style="position:absolute;left:78.75px;top:277.63px;width:81.48px;font-family:'Liberation Sans',sans-serif;font-size:15.5px;line-height:19px;color:#1b1b1b;white-space:nowrap;transform:scaleX(0.8952);transform-origin:left 50%;">Monitors [2]</div><div style="position:absolute;left:78.75px;top:307.63px;width:128.86px;font-family:'Liberation Sans',sans-serif;font-size:15.5px;line-height:19px;color:#1b1b1b;white-space:nowrap;transform:scaleX(0.8952);transform-origin:left 50%;">Other Devices [12]</div><div style="position:absolute;left:78.75px;top:337.63px;width:115.92px;font-family:'Liberation Sans',sans-serif;font-size:15.5px;line-height:19px;color:#1b1b1b;white-space:nowrap;transform:scaleX(0.8952);transform-origin:left 50%;">VRM Devices [1]</div><div style="position:absolute;left:102.50px;top:367.63px;width:121.17px;font-family:'Liberation Sans',sans-serif;font-size:15.5px;line-height:19px;color:#1b1b1b;white-space:nowrap;transform:scaleX(0.8952);transform-origin:left 50%;">192.168.1.122 [1]</div><div style="position:absolute;left:126.25px;top:397.63px;width:66.00px;font-family:'Liberation Sans',sans-serif;font-size:15.5px;line-height:19px;color:#1b1b1b;white-space:nowrap;transform:scaleX(0.8952);transform-origin:left 50%;">Pool 0 [6]</div><div style="position:absolute;left:150.00px;top:427.63px;width:121.17px;font-family:'Liberation Sans',sans-serif;font-size:15.5px;line-height:19px;color:#1b1b1b;white-space:nowrap;transform:scaleX(0.8952);transform-origin:left 50%;">192.168.1.165 [1]</div><div style="position:absolute;left:150.00px;top:457.63px;width:112.55px;font-family:'Liberation Sans',sans-serif;font-size:15.5px;line-height:19px;color:#1b1b1b;white-space:nowrap;transform:scaleX(0.8952);transform-origin:left 50%;">192.168.1.47 [1]</div><div style="position:absolute;left:150.00px;top:487.63px;width:149.55px;font-family:'Liberation Sans',sans-serif;font-size:15.5px;line-height:19px;color:#1b1b1b;white-space:nowrap;transform:scaleX(0.8952);transform-origin:left 50%;">Streaming Gateway/1</div><div style="position:absolute;left:150.00px;top:517.63px;width:196.98px;font-family:'Liberation Sans',sans-serif;font-size:15.5px;line-height:19px;color:#1b1b1b;white-space:nowrap;transform:scaleX(0.8952);transform-origin:left 50%;">5000AIO (192.168.1.122) [1]</div><div style="position:absolute;left:150.00px;top:577.63px;width:228.84px;font-family:'Liberation Sans',sans-serif;font-size:15.5px;line-height:19px;color:#1b1b1b;white-space:nowrap;transform:scaleX(0.8952);transform-origin:left 50%;">BOSCH_E2800_Test (192.168.1.</div><div style="position:absolute;left:150.00px;top:607.63px;width:228.84px;font-family:'Liberation Sans',sans-serif;font-size:15.5px;line-height:19px;color:#1b1b1b;white-space:nowrap;transform:scaleX(0.8952);transform-origin:left 50%;">BOSCH_E2800_Test (192.168.1.</div><div style="position:absolute;left:78.75px;top:637.63px;width:65.12px;font-family:'Liberation Sans',sans-serif;font-size:15.5px;line-height:19px;color:#1b1b1b;white-space:nowrap;transform:scaleX(0.8952);transform-origin:left 50%;">Live Only</div><div style="position:absolute;left:78.75px;top:667.63px;width:96.16px;font-family:'Liberation Sans',sans-serif;font-size:15.5px;line-height:19px;color:#1b1b1b;white-space:nowrap;transform:scaleX(0.8952);transform-origin:left 50%;">Local Storage</div><div style="position:absolute;left:78.75px;top:697.63px;width:123.72px;font-family:'Liberation Sans',sans-serif;font-size:15.5px;line-height:19px;color:#1b1b1b;white-space:nowrap;transform:scaleX(0.8952);transform-origin:left 50%;">Unmanaged Sites</div><div style="position:absolute;left:172.29px;top:548.33px;width:9.12px;font-family:'Liberation Sans',sans-serif;font-size:15.5px;line-height:19px;color:#fff;white-space:nowrap;transform:scaleX(0.8500);transform-origin:center 50%;">0</div></div></div><svg style="position:absolute;left:0;top:0" width="1287" height="122" viewBox="0 0 1287 122"><path d="M-2 61.8 H157 L172 31.8 L156.5 1.5" fill="none" stroke="#1b5d9b" stroke-width="2.4" stroke-linejoin="miter"/><path d="M178 62.6 H337 L354 31.8 L337 1.5" fill="none" stroke="#1e1e1e" stroke-width="1.35"/><path d="M360 62.6 H518 L535 31.8 L518 1.5" fill="none" stroke="#1e1e1e" stroke-width="1.35"/><path d="M541 62.6 H699.3 L716.3 31.8 L699.3 1.5" fill="none" stroke="#1e1e1e" stroke-width="1.35"/><path d="M722.3 62.6 H880.7 L897.7 31.8 L880.7 1.5" fill="none" stroke="#1e1e1e" stroke-width="1.35"/><path d="M903.7 62.6 H1061.6 L1078.6 31.8 L1061.6 1.5" fill="none" stroke="#1e1e1e" stroke-width="1.35"/><path d="M1084.6 62.6 H1243 L1260 31.8 L1243 1.5" fill="none" stroke="#1e1e1e" stroke-width="1.35"/><rect x="0" y="67" width="1287" height="1.2" fill="#e6e6d8"/><g fill="#1b5d9b"><rect x="9.3" y="18.3" width="29.9" height="10.6" rx="2.6"/><rect x="9.3" y="31.9" width="29.9" height="10.8" rx="2.6"/></g><g fill="#fff"><circle cx="15.6" cy="23.6" r="1.9"/><circle cx="15.6" cy="37.3" r="1.9"/><rect x="23" y="22.8" width="11.5" height="1.7"/><rect x="23" y="36.5" width="11.5" height="1.7"/></g><circle cx="205.5" cy="31.75" r="21.4" fill="#000"/><polygon points="205.50,8.75 209.29,22.60 218.94,18.31 214.65,27.96 228.50,31.75 214.65,35.54 218.94,45.19 209.29,40.90 205.50,54.75 201.71,40.90 192.06,45.19 196.35,35.54 182.50,31.75 196.35,27.96 192.06,18.31 201.71,22.60" fill="#fff"/><circle cx="205.5" cy="31.75" r="5.1" fill="#000"/><path d="M365.4 28 V14.3 H392.8 V28" fill="none" stroke="#000" stroke-width="2.6"/><path d="M365.4 20 V35.5 H383.9" fill="none" stroke="#000" stroke-width="2.6"/><rect x="364.1" y="13" width="30" height="7.4" fill="#000"/><rect x="370.4" y="9.4" width="2.6" height="4" fill="#000"/><rect x="384.3" y="9.4" width="2.6" height="4" fill="#000"/><circle cx="397.3" cy="42" r="13.4" fill="#fff"/><circle cx="397.3" cy="42" r="11.9" fill="#000"/><path d="M396.9 33.9 V43.2 H404" fill="none" stroke="#fff" stroke-width="2.6"/><path d="M547 31 V15.2 Q547 13.2 549 13.2 H575.8 Q577.8 13.2 577.8 15.2 V29.5 Q577.8 31.5 575.8 31.5 H569.3" fill="none" stroke="#000" stroke-width="2.3"/><path d="M562 18.4 H578 V26.8 H562 Q559.4 26.8 559.4 24.2 V21 Q559.4 18.4 562 18.4 Z" fill="#000"/><rect x="581.9" y="17" width="8.3" height="11" fill="#000"/><g fill="#000"><rect x="555.5999999999999" y="28.8" width="4.4" height="5" rx="0.6" transform="rotate(0 557.8 40.6)"/><rect x="555.5999999999999" y="28.8" width="4.4" height="5" rx="0.6" transform="rotate(45 557.8 40.6)"/><rect x="555.5999999999999" y="28.8" width="4.4" height="5" rx="0.6" transform="rotate(90 557.8 40.6)"/><rect x="555.5999999999999" y="28.8" width="4.4" height="5" rx="0.6" transform="rotate(135 557.8 40.6)"/><rect x="555.5999999999999" y="28.8" width="4.4" height="5" rx="0.6" transform="rotate(180 557.8 40.6)"/><rect x="555.5999999999999" y="28.8" width="4.4" height="5" rx="0.6" transform="rotate(225 557.8 40.6)"/><rect x="555.5999999999999" y="28.8" width="4.4" height="5" rx="0.6" transform="rotate(270 557.8 40.6)"/><rect x="555.5999999999999" y="28.8" width="4.4" height="5" rx="0.6" transform="rotate(315 557.8 40.6)"/><circle cx="557.8" cy="40.6" r="9.4"/></g><circle cx="557.8" cy="40.6" r="4.6" fill="#fff"/><path d="M749.2 12 L768.3 50.8 H730.2 Z" fill="#000" stroke="#000" stroke-width="1" stroke-linejoin="round"/><path d="M746.8 25.6 H752 L751 40 H747.8 Z" fill="#fff"/><circle cx="749.4" cy="44.5" r="2.1" fill="#fff"/><path d="M918.2 39.1 V27.5 A12.35 12.1 0 0 1 942.9 27.5 V39.1 Z" fill="#000"/><rect x="914" y="41.9" width="32.8" height="6.1" rx="1.2" fill="#000"/><path d="M922.4 35.6 V28.5 Q922.4 21 930.8 20.1" fill="none" stroke="#fff" stroke-width="2.1" stroke-linecap="round"/><g fill="#000"><circle cx="1111.7" cy="28" r="6"/><path d="M1101.9 43 Q1101.9 34 1111.8 34 Q1121.9 34 1121.9 43 Z"/><circle cx="1096.2" cy="32.3" r="4.4"/><path d="M1089.2 43 Q1089.2 36.6 1095.5 36.6 H1100.3 V43 Z"/><circle cx="1127.5" cy="32.3" r="4.4"/><path d="M1134 43 Q1134 36.6 1127.8 36.6 H1123.1 V43 Z"/></g><g fill="#fff"><rect x="1100.3" y="35" width="1.4" height="9"/><rect x="1121.9" y="35" width="1.3" height="9"/></g><path d="M11.3 85 H28.2 L29.6 86.6 V103.6 H11.3 Z" fill="none" stroke="#2a2a2a" stroke-width="1.4"/><path d="M15.8 85 V91 H24.5 V85" fill="none" stroke="#2a2a2a" stroke-width="1.3"/><path d="M61.8 88.6 A10.6 10.6 0 1 1 76.6 104.2" fill="none" stroke="#2a2a2a" stroke-width="1.5"/><path d="M59.6 84.6 V90.8 H65.7 Z" fill="#2a2a2a"/><circle cx="118.8" cy="89.5" r="6.8" fill="#ececec"/><path d="M116.9 99 V89.2 Q116.9 87.2 118.5 87.2 Q120.1 87.2 120.1 89.2 V93.6 Q124 93.6 126.4 95 Q128.3 96.5 128 100 Q127.6 106.5 121 106.8 Q116 106.8 113.8 103 L112.4 99.5 Q112.7 97.6 114.6 98.4 Z" fill="#fbfbfb" stroke="#dedede" stroke-width="1.1"/><rect x="148.2" y="80.5" width="1.2" height="28.5" fill="#d4d2c8"/><rect x="305.6" y="80.9" width="1.2" height="28.1" fill="#d4d2c8"/><path d="M169 85.3 L187.3 103 M187.3 85.3 L169 103" stroke="#2a2a2a" stroke-width="1.4"/><g transform="translate(220.6 101.6) rotate(-42)"><path d="M0 0 L5 -3 H22.5 Q25 -3 25 0 Q25 3 22.5 3 H5 Z" fill="none" stroke="#2a2a2a" stroke-width="1.3" stroke-linejoin="round"/><path d="M20 -3 V3" stroke="#2a2a2a" stroke-width="1.1"/><path d="M0 0 L2.5 -1.5 V1.5 Z" fill="#2a2a2a"/></g><path d="M215.3 102.4 H221" stroke="#2a2a2a" stroke-width="1.2"/><path d="M278.48 81.83 A12.6 12.6 0 0 1 285.53 104.19" fill="none" stroke="#262626" stroke-width="1.45"/><path d="M276.72 106.97 A12.6 12.6 0 0 1 269.67 84.61" fill="none" stroke="#262626" stroke-width="1.45"/><path d="M283.9 99.4 V104.1 H288.4" fill="none" stroke="#111" stroke-width="1.9"/><path d="M267.6 84.9 H272.3 V89.6" fill="none" stroke="#111" stroke-width="1.9"/><rect x="318.1" y="89.2" width="24.8" height="9.9" rx="2.6" fill="#000"/><circle cx="323.7" cy="94.4" r="2.2" fill="#fff"/><rect x="329.3" y="93.9" width="8.5" height="1.4" fill="#ddd"/><g transform="translate(331.3 105.8) rotate(-43)"><path d="M0 0 L4 -3.4 H16.5 Q19.2 -3.4 19.2 0 Q19.2 3.4 16.5 3.4 H4 Z" fill="#fff" stroke="#fff" stroke-width="2.6" stroke-linejoin="round"/><path d="M0 0 L4 -2.6 H16.5 Q18.6 -2.6 18.6 0 Q18.6 2.6 16.5 2.6 H4 Z" fill="#fff" stroke="#111" stroke-width="1.35" stroke-linejoin="round"/><path d="M15 -2.6 V2.6" stroke="#111" stroke-width="1.1"/><path d="M0 0 L2 -1.2 V1.2 Z" fill="#111"/></g><path d="M326.8 107.5 Q329.5 107.6 331.3 105.9" fill="none" stroke="#111" stroke-width="1.3"/><rect x="0" y="120.6" width="1287" height="1.4" fill="#8a8a76"/></svg><div style="position:absolute;left:79.80px;top:20.98px;width:62.89px;font-family:'Liberation Sans',sans-serif;font-size:16.5px;line-height:21px;color:#111;white-space:nowrap;font-weight:bold;transform:scaleX(0.8655);transform-origin:center 50%;">Devices</div><div style="position:absolute;left:255.06px;top:11.82px;width:71.19px;font-family:'Liberation Sans',sans-serif;font-size:16.1px;line-height:20px;color:#111;white-space:nowrap;transform:scaleX(0.8304);transform-origin:center 50%;">Maps and</div><div style="position:absolute;left:258.55px;top:26.82px;width:65.80px;font-family:'Liberation Sans',sans-serif;font-size:16.1px;line-height:20px;color:#111;white-space:nowrap;transform:scaleX(0.8576);transform-origin:center 50%;">Structure</div><div style="position:absolute;left:434.28px;top:21.05px;width:76.55px;font-family:'Liberation Sans',sans-serif;font-size:16.3px;line-height:20px;color:#111;white-space:nowrap;transform:scaleX(0.8482);transform-origin:center 50%;">Schedules</div><div style="position:absolute;left:604.49px;top:11.72px;width:97.12px;font-family:'Liberation Sans',sans-serif;font-size:16.1px;line-height:20px;color:#111;white-space:nowrap;transform:scaleX(0.8445);transform-origin:center 50%;">Cameras and</div><div style="position:absolute;left:617.32px;top:26.52px;width:73.86px;font-family:'Liberation Sans',sans-serif;font-size:16.1px;line-height:20px;color:#111;white-space:nowrap;transform:scaleX(0.8465);transform-origin:center 50%;">Recording</div><div style="position:absolute;left:810.11px;top:20.65px;width:50.28px;font-family:'Liberation Sans',sans-serif;font-size:16.3px;line-height:20px;color:#111;white-space:nowrap;transform:scaleX(0.8437);transform-origin:center 50%;">Events</div><div style="position:absolute;left:990.56px;top:20.65px;width:51.17px;font-family:'Liberation Sans',sans-serif;font-size:16.3px;line-height:20px;color:#111;white-space:nowrap;transform:scaleX(0.8545);transform-origin:center 50%;">Alarms</div><div style="position:absolute;left:1152.66px;top:20.65px;width:89.19px;font-family:'Liberation Sans',sans-serif;font-size:16.3px;line-height:20px;color:#111;white-space:nowrap;transform:scaleX(0.8490);transform-origin:center 50%;">User groups</div><div style="position:absolute;left:361.60px;top:83.92px;width:192.75px;font-family:'Liberation Sans',sans-serif;font-size:16.4px;line-height:20px;color:#1a1a1a;white-space:nowrap;transform:scaleX(0.8759);transform-origin:left 50%;">Change device passwords</div>
</body></html>
